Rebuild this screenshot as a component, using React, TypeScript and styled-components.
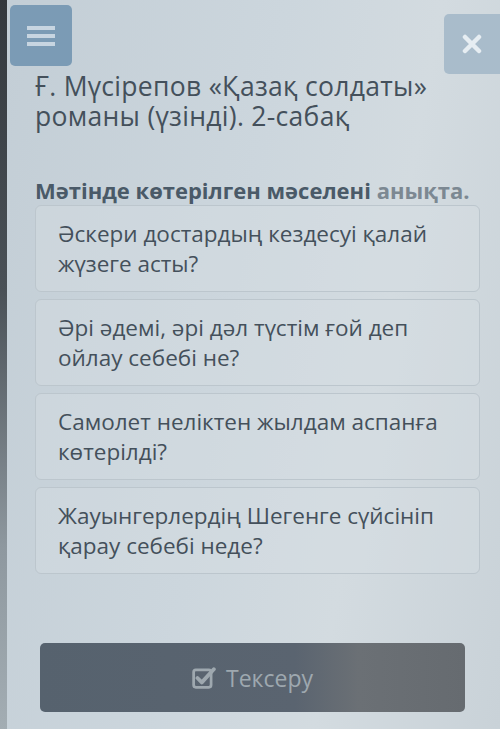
import { createGlobalStyle, styled } from "styled-components";

const Global = createGlobalStyle`
  html, body { margin: 0; padding: 0; }
  body {
    background: #c7d1d8;
    font-family: "Open Sans", "Noto Sans", sans-serif;
  }
`;

const Screen = styled.div`
  width: 500px;
  height: 729px;
  overflow: hidden;
  box-sizing: border-box;
  border-left: 7px solid;
  border-image: linear-gradient(180deg, #33383d 0%, #4a5157 40%, #8e989f 75%, #a3adb3 100%) 1;
  background: linear-gradient(100deg, #c3ced6 0%, #ccd6dd 45%, #d3dbe0 70%, #c9d2d8 100%);
  display: flex;
  flex-direction: column;
`;

const TopBar = styled.div`
  height: 66px;
  display: flex;
  justify-content: space-between;
  align-items: flex-start;
  padding: 5px 0 0 3px;
  box-sizing: border-box;
`;

const MenuButton = styled.div`
  width: 62px;
  height: 61px;
  background: #7b9bb5;
  border-radius: 5px;
  display: flex;
  align-items: center;
  justify-content: center;
`;

const CloseButton = styled.div`
  width: 56px;
  height: 60px;
  margin-top: 9px;
  background: #a9bccb;
  border-radius: 5px 0 0 5px;
  display: flex;
  align-items: center;
  justify-content: center;
`;

const Title = styled.h1`
  margin: 5px 0 0 28px;
  font-size: 26.5px;
  line-height: 30px;
  letter-spacing: 0.3px;
  font-weight: 400;
  color: #44505b;
`;

const TitleLine = styled.span`
  display: block;
`;

const Prompt = styled.div`
  margin: 45px 0 0 28px;
  font-size: 22px;
  line-height: 29px;
  font-weight: 700;
  color: #4a5a68;
  span { color: #7c8892; }
`;

const Options = styled.div`
  margin: 0 20px 0 28px;
  display: flex;
  flex-direction: column;
  gap: 7px;
`;

const Option = styled.div`
  height: 87px;
  box-sizing: border-box;
  padding: 13px 22px;
  border: 1px solid #bcc6cd;
  border-radius: 6px;
  background: rgba(214, 222, 228, 0.4);
  font-size: 22.5px;
  line-height: 30px;
  color: #44505b;
`;

const Footer = styled.div`
  margin-top: auto;
  padding: 0 35px 17px 33px;
`;

const CheckButton = styled.div`
  height: 69px;
  border-radius: 5px;
  background: linear-gradient(90deg, #56626e 0%, #5a6470 60%, #6b7075 75%, #666b70 100%);
  display: flex;
  align-items: center;
  justify-content: center;
  gap: 10px;
  color: #9ea8af;
  font-size: 23px;
`;

export default function App() {
  return (
    <>
      <Global />
      <Screen>
        <TopBar>
          <MenuButton>
            <svg width="28" height="24" viewBox="0 0 28 24">
              <rect x="0" y="2" width="28" height="4" fill="#c7d5e1" />
              <rect x="0" y="10" width="28" height="4" fill="#c7d5e1" />
              <rect x="0" y="18" width="28" height="4" fill="#c7d5e1" />
            </svg>
          </MenuButton>
          <CloseButton>
            <svg width="20" height="20" viewBox="0 0 20 20">
              <path d="M3 3L17 17M17 3L3 17" stroke="#e6edf2" strokeWidth="4.5" strokeLinecap="round" />
            </svg>
          </CloseButton>
        </TopBar>
        <Title>
          <TitleLine>Ғ. Мүсірепов «Қазақ солдаты»</TitleLine>
          <TitleLine>романы (үзінді). 2-сабақ</TitleLine>
        </Title>
        <Prompt>
          Мәтінде көтерілген мәселені <span>анықта.</span>
        </Prompt>
        <Options>
          <Option>Әскери достардың кездесуі қалай жүзеге асты?</Option>
          <Option>Әрі әдемі, әрі дәл түстім ғой деп ойлау себебі не?</Option>
          <Option>Самолет неліктен жылдам аспанға көтерілді?</Option>
          <Option>Жауынгерлердің Шегенге сүйсініп қарау себебі неде?</Option>
        </Options>
        <Footer>
          <CheckButton>
            <svg width="24" height="24" viewBox="0 0 22 22">
              <rect x="1.5" y="3.5" width="16" height="16" rx="2" fill="none" stroke="#9ea8af" strokeWidth="2.5" />
              <path d="M5 11l4 4 11-12" fill="none" stroke="#9ea8af" strokeWidth="3.5" strokeLinecap="round" strokeLinejoin="round" />
            </svg>
            Тексеру
          </CheckButton>
        </Footer>
      </Screen>
    </>
  );
}
